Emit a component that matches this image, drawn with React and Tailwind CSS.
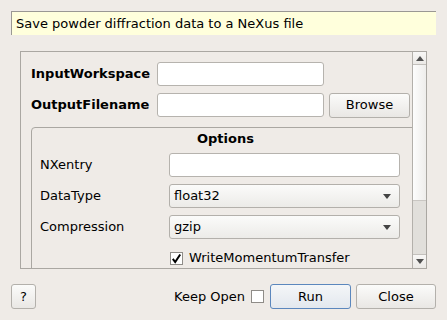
import React from "react";

const btn =
  "h-[25px] flex items-center justify-center rounded-[3px] border border-[#b3b0ab] bg-gradient-to-b from-[#fbfbfa] to-[#e9e7e4] text-[13px] text-black";

function Arrow({ up }) {
  return (
    <svg width="8" height="5" viewBox="0 0 8 5">
      {up ? (
        <polygon points="0,5 8,5 4,0" fill="#505050" />
      ) : (
        <polygon points="0,0 8,0 4,5" fill="#505050" />
      )}
    </svg>
  );
}

function Combo({ text }) {
  return (
    <div className="w-[231px] h-[24px] flex items-center justify-between rounded-[3px] border border-[#b3b0ab] bg-gradient-to-b from-[#fbfbfa] to-[#ecebe8] pl-[4px] pr-[8px]">
      <span>{text}</span>
      <svg width="8" height="5" viewBox="0 0 8 5">
        <polygon points="0,0 8,0 4,5" fill="#444" />
      </svg>
    </div>
  );
}

export default function App() {
  return (
    <div
      className="w-[447px] h-[320px] bg-[#efebe7] flex flex-col pl-[11px] pr-[11px] pt-[11px] text-[13px] text-black overflow-hidden"
      style={{ fontFamily: "'DejaVu Sans', sans-serif" }}
    >
      {/* banner */}
      <div className="h-[24px] flex items-center pl-[4px] bg-[#ffffdc] border-t border-l border-[#9a9894] shrink-0">
        Save powder diffraction data to a NeXus file
      </div>

      {/* scroll area */}
      <div className="mt-[16px] ml-[9px] w-[407px] h-[218px] border border-[#aaa7a2] flex shrink-0">
        <div className="w-[391px] h-full overflow-hidden pl-[10px] pt-[10px]">
          <div className="flex flex-col gap-[7px]">
            <div className="flex items-center h-[24px]">
              <span className="w-[126px] font-bold">InputWorkspace</span>
              <div className="w-[167px] h-[24px] rounded-[3px] border border-[#b6b3ae] bg-white" />
            </div>
            <div className="flex items-center h-[24px]">
              <span className="w-[126px] font-bold">OutputFilename</span>
              <div className="w-[167px] h-[24px] rounded-[3px] border border-[#b6b3ae] bg-white" />
              <div className={btn + " ml-[5px] w-[81px] h-[24px]"}>Browse</div>
            </div>
          </div>

          {/* group box */}
          <div className="mt-[10px] w-[389px] h-[200px] shrink-0 border border-[#aaa7a2] rounded-t-[4px]">
            <div className="h-[22px] flex items-center justify-center font-bold">Options</div>
            <div className="mt-[3px] pl-[8px] flex flex-col gap-[7px]">
              <div className="flex items-center h-[24px]">
                <span className="w-[129px]">NXentry</span>
                <div className="w-[231px] h-[24px] rounded-[3px] border border-[#b6b3ae] bg-white" />
              </div>
              <div className="flex items-center h-[24px]">
                <span className="w-[129px]">DataType</span>
                <Combo text="float32" />
              </div>
              <div className="flex items-center h-[24px]">
                <span className="w-[129px]">Compression</span>
                <Combo text="gzip" />
              </div>
              <div className="flex items-center h-[24px]">
                <span className="w-[130px]" />
                <div className="w-[13px] h-[13px] border border-[#8f8c88] bg-white flex items-center justify-center">
                  <svg width="11" height="11" viewBox="0 0 11 11">
                    <path d="M1.8 5.8 L4.2 9 L9.2 1.5" stroke="#000" strokeWidth="2" fill="none" />
                  </svg>
                </div>
                <span className="ml-[6px]">WriteMomentumTransfer</span>
              </div>
            </div>
          </div>
        </div>

        {/* scrollbar */}
        <div className="w-[14px] h-full border-l border-[#b3b0ab] flex flex-col">
          <div className="h-[13px] flex items-center justify-center bg-gradient-to-b from-[#f8f7f6] to-[#ebe9e6] border-b border-[#c3c0bc] shrink-0">
            <Arrow up />
          </div>
          <div className="h-[136px] bg-gradient-to-r from-[#fdfdfd] to-[#eeedeb] border-b border-[#c9c6c2] shrink-0" />
          <div className="flex-1 bg-[#e1dfdb]" />
          <div className="h-[14px] flex items-center justify-center bg-gradient-to-b from-[#f8f7f6] to-[#ebe9e6] border-t border-[#c3c0bc] shrink-0">
            <Arrow />
          </div>
        </div>
      </div>

      {/* bottom buttons */}
      <div className="mt-[15px] flex items-center justify-between">
        <div className={btn + " w-[25px]"}>?</div>
        <div className="flex items-center">
          <span>Keep Open</span>
          <div className="ml-[6px] w-[13px] h-[13px] border border-[#8f8c88] bg-white" />
          <div className="ml-[6px] w-[81px] h-[25px] flex items-center justify-center rounded-[3px] border border-[#5b87bd] bg-gradient-to-b from-[#f4f6f8] to-[#e3e8ee]">
            Run
          </div>
          <div className={btn + " ml-[5px] w-[80px]"}>Close</div>
        </div>
      </div>
    </div>
  );
}
